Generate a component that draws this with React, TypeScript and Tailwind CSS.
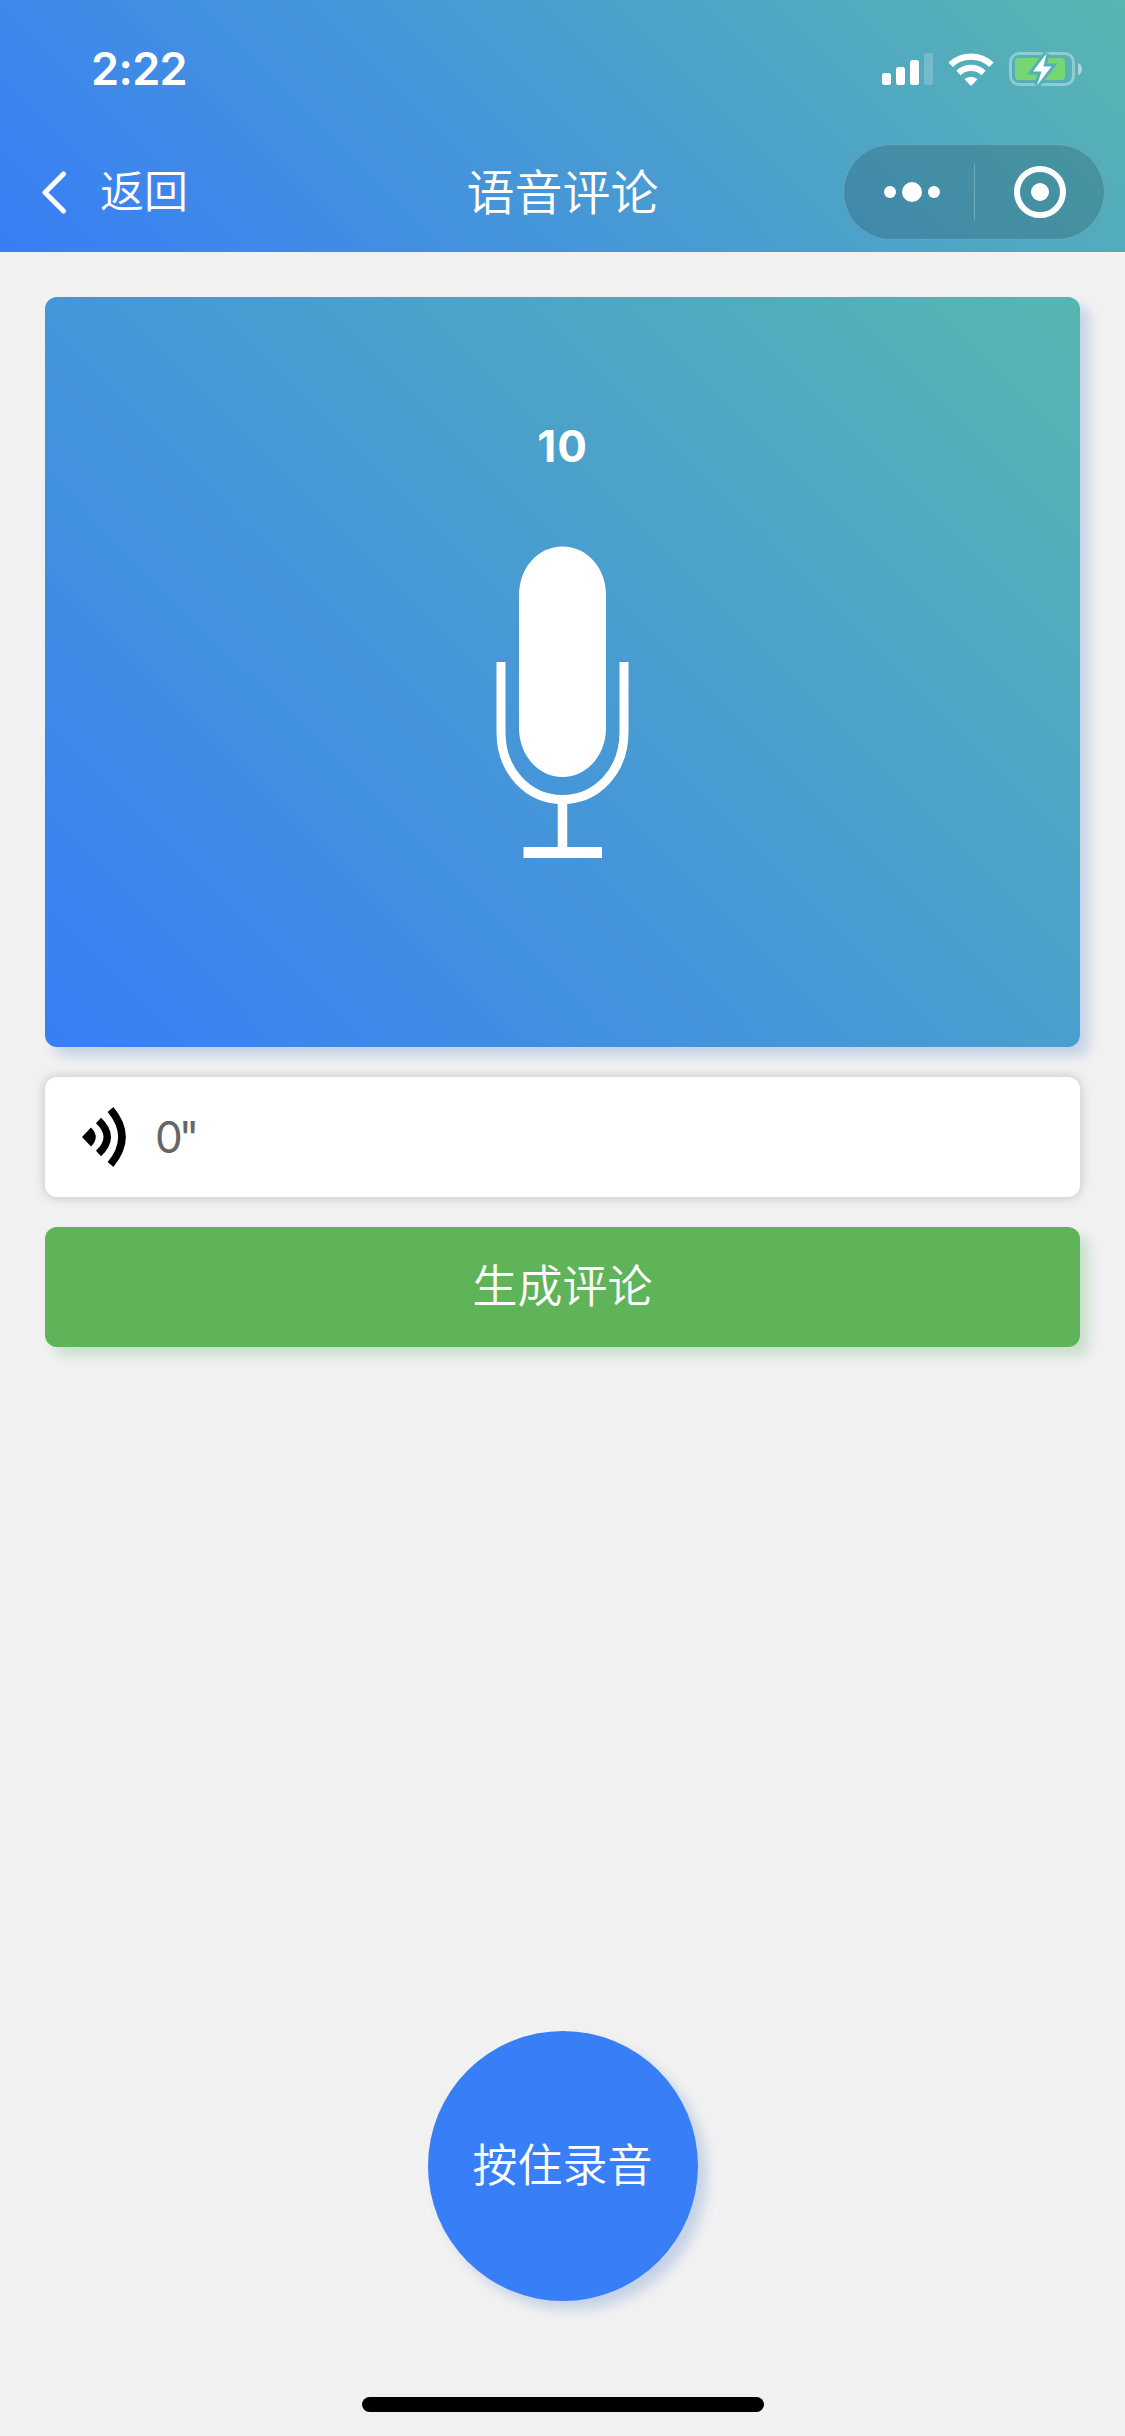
import { useState } from "react";

function SignalIcon() {
  return (
    <svg width="51" height="32" viewBox="0 0 51 32" fill="#fff">
      <rect x="0" y="20" width="9" height="12" rx="2.5" />
      <rect x="14" y="14" width="9" height="18" rx="2.5" />
      <rect x="28" y="7" width="9" height="25" rx="2.5" />
      <rect x="42" y="0" width="9" height="32" rx="2.5" opacity="0.2" />
    </svg>
  );
}

function WifiIcon() {
  return (
    <svg width="46" height="33" viewBox="0 0 46 33" fill="none" stroke="#fff">
      <path d="M2.6 11.8A29.5 29.5 0 0 1 43.4 11.8" strokeWidth="6.4" />
      <path d="M10.5 20A18 18 0 0 1 35.5 20" strokeWidth="6.2" />
      <path d="M16.5 26.3A9.5 9.5 0 0 1 29.5 26.3L23 33Z" fill="#fff" stroke="none" />
    </svg>
  );
}

function BatteryIcon() {
  return (
    <svg width="75" height="36" viewBox="0 0 75 36">
      <mask id="bolt-gap">
        <rect width="75" height="36" fill="#fff" />
        <path d="M38.500 2.500L25 20.500H33.500L29 34.500L43.500 15.500H35.500Z" fill="#000" stroke="#000" strokeWidth="6" />
      </mask>
      <g mask="url(#bolt-gap)">
        <rect x="2.500" y="2.500" width="63" height="31" rx="8.500" fill="none" stroke="#fff" strokeOpacity="0.35" strokeWidth="3" />
        <rect x="7" y="7" width="50" height="22" rx="4" fill="#77d673" />
      </g>
      <path d="M70 12c5.300 1.800 5.300 10.400 0 12.200Z" fill="#fff" opacity="0.5" />
      <path d="M38.500 2.500L25 20.500H33.500L29 34.500L43.500 15.500H35.500Z" fill="#fff" />
    </svg>
  );
}

function MicIcon() {
  return (
    <svg width="134" height="313" viewBox="0 0 134 313" fill="none" stroke="#fff">
      <path d="M23 49C23 22 42 0.5 66.500 0.500S110 22 110 49V182C110 209 91 231 66.500 231S23 209 23 182Z" fill="#fff" stroke="none" />
      <path d="M5 116V186C5 225 32 253.500 66.500 253.500S128 225 128 186V116" strokeWidth="9" />
      <path d="M66.500 254V306" strokeWidth="9.500" />
      <path d="M27.500 306.500H106" strokeWidth="11" />
    </svg>
  );
}

function VoiceIcon() {
  return (
    <svg width="46" height="60" viewBox="0 0 46 60">
      <path d="M0 30L9 20.500Q18.500 30 9 39.500Z" fill="#000" />
      <path d="M16.500 13.500Q34 30 16.500 46.500" fill="none" stroke="#000" strokeWidth="7.500" />
      <path d="M28.500 2.500Q51.500 30 28.500 57.500" fill="none" stroke="#000" strokeWidth="7.500" />
    </svg>
  );
}

function StatusBar() {
  return (
    <div className="flex h-[132px] items-start justify-between pt-[51px] pr-[42px] pl-[91px]">
      <span className="font-['Inter'] text-[45px] leading-[36px] font-semibold tracking-[-0.6px]">2:22</span>
      <div className="flex items-center">
        <SignalIcon />
        <div className="ml-[15px]">
          <WifiIcon />
        </div>
        <div className="ml-[14px]">
          <BatteryIcon />
        </div>
      </div>
    </div>
  );
}

function NavBar() {
  return (
    <div className="grid h-[120px] grid-cols-3 items-center">
      <button type="button" className="flex items-center pl-[42px]">
        <svg width="25" height="43" viewBox="0 0 25 43" fill="none" stroke="#fff" strokeWidth="5" strokeLinecap="round" strokeLinejoin="round">
          <path d="M21.500 3L3 21.500L21.500 40" />
        </svg>
        <span className="ml-[33px] pb-[6px] text-[44px] leading-[60px] font-[350]">返回</span>
      </button>
      <h1 className="pb-[6px] text-center text-[48px] leading-[64px] font-[350]">语音评论</h1>
      <div className="mr-[20px] flex h-[96px] w-[262px] items-center justify-self-end rounded-full border border-white/20 bg-black/15">
        <div className="flex w-[130px] items-center justify-center gap-[6px] pl-[6px]">
          <span className="size-[12px] rounded-full bg-white" />
          <span className="size-[20px] rounded-full bg-white" />
          <span className="size-[12px] rounded-full bg-white" />
        </div>
        <div className="h-[56px] w-px bg-white/25" />
        <div className="flex flex-1 items-center justify-center">
          <div className="flex size-[52px] items-center justify-center rounded-full border-[6px] border-white">
            <span className="size-[18px] rounded-full bg-white" />
          </div>
        </div>
      </div>
    </div>
  );
}

export default function App() {
  const [limit] = useState(10);
  const [duration] = useState(0);

  return (
    <div className="flex h-[2436px] w-[1125px] flex-col bg-[#f1f1f1] font-['Noto_Sans_CJK_SC',sans-serif] text-white">
      <header className="h-[252px] bg-[linear-gradient(45deg,#387ef7,#58b6b0)]">
        <StatusBar />
        <NavBar />
      </header>

      <main className="flex flex-1 flex-col px-[45px] pt-[45px]">
        <div className="flex h-[750px] flex-col items-center rounded-[12px] bg-[linear-gradient(45deg,#387ef7,#58b6b0)] pt-[123px] shadow-[9px_9px_12px_rgba(26,89,188,0.2)]">
          <span className="font-['Inter'] text-[44px] leading-[52px] font-bold tracking-[1px]">{limit}</span>
          <div className="mt-[74px]">
            <MicIcon />
          </div>
        </div>

        <div className="mt-[30px] flex h-[120px] items-center rounded-[12px] bg-white pl-[37px] shadow-[0_0_12px_rgba(0,0,0,0.2)]">
          <VoiceIcon />
          <span className="ml-[27px] font-['Inter'] text-[44px] leading-[60px] tracking-[-4px] text-[#666]">{duration}"</span>
        </div>

        <button type="button" className="mt-[30px] h-[120px] rounded-[12px] bg-[#5fb359] pb-[6px] text-[45px] font-[350] shadow-[9px_9px_12px_rgba(48,156,63,0.2)]">
          生成评论
        </button>

        <button type="button" className="mt-auto mb-[96px] size-[270px] self-center rounded-full bg-[#387ff7] pb-[6px] text-[45px] font-[350] shadow-[9px_9px_12px_rgba(26,89,188,0.2)]">
          按住录音
        </button>
      </main>

      <div className="mb-[24px] h-[15px] w-[402px] self-center rounded-full bg-black" />
    </div>
  );
}
